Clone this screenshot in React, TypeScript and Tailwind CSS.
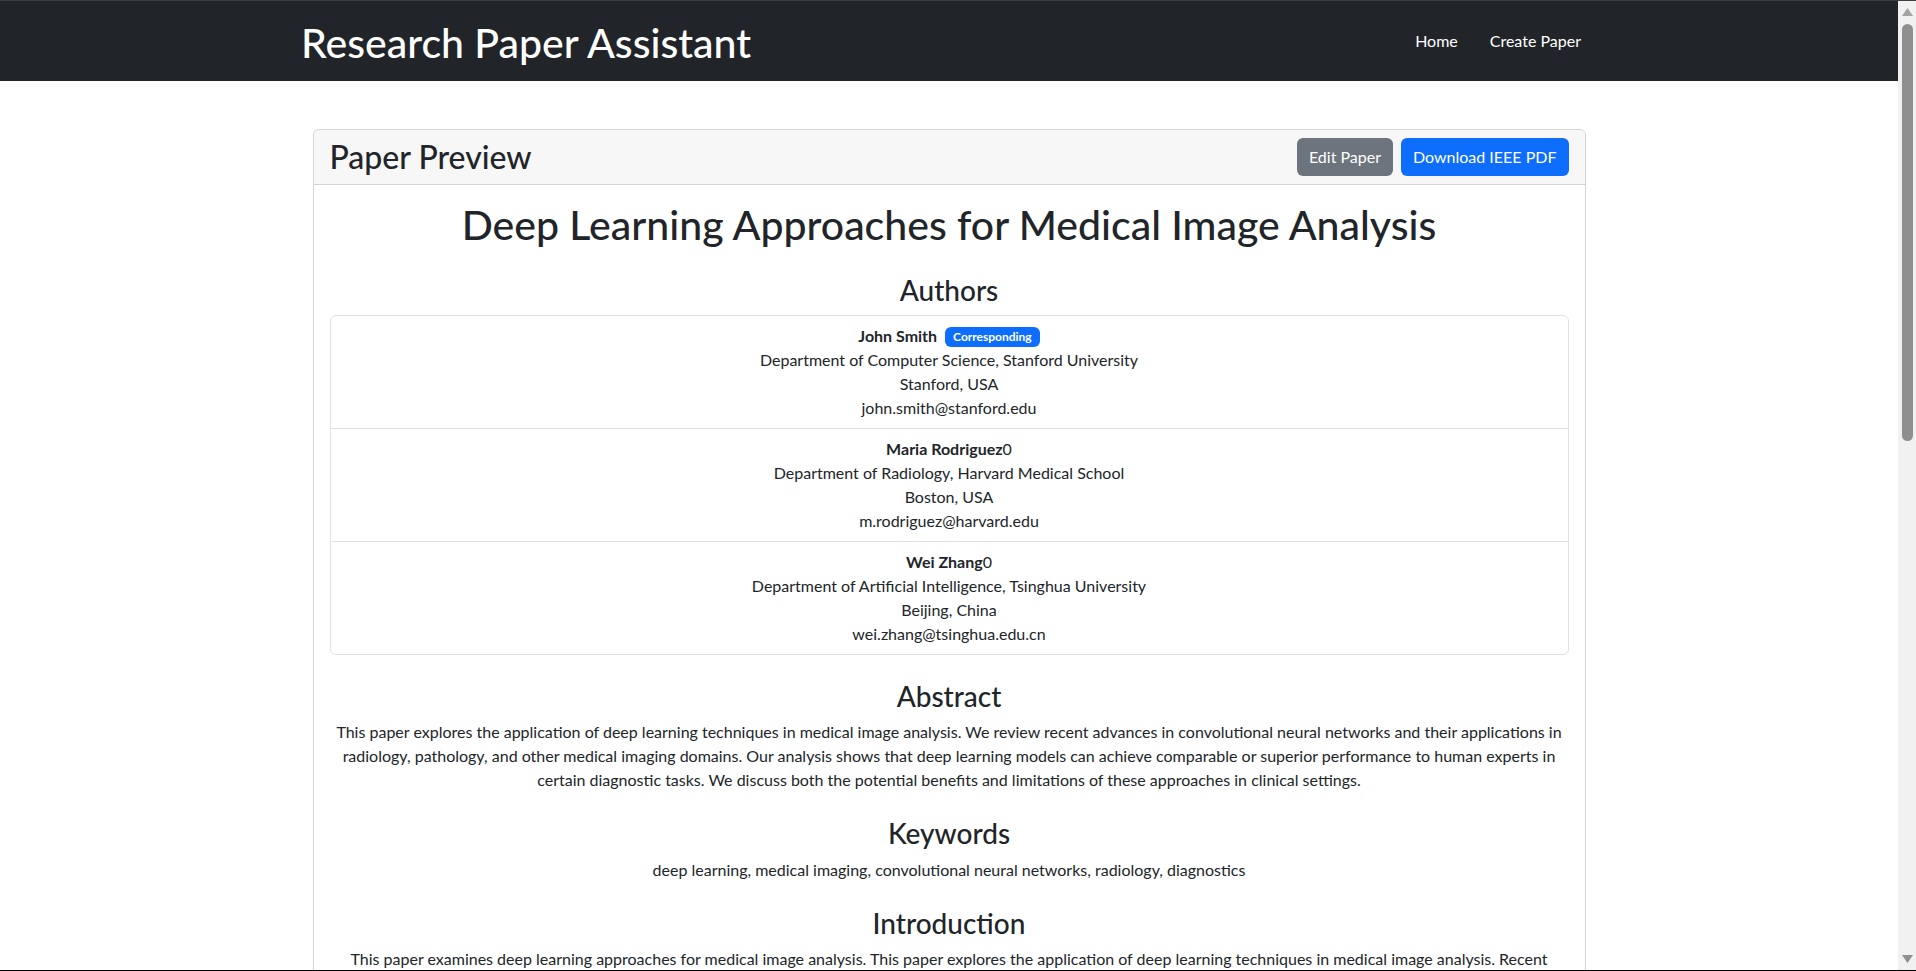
import React from "react";

const authors = [
  {
    name: "John Smith",
    corresponding: true,
    dept: "Department of Computer Science, Stanford University",
    loc: "Stanford, USA",
    email: "john.smith@stanford.edu",
  },
  {
    name: "Maria Rodriguez",
    corresponding: false,
    dept: "Department of Radiology, Harvard Medical School",
    loc: "Boston, USA",
    email: "m.rodriguez@harvard.edu",
  },
  {
    name: "Wei Zhang",
    corresponding: false,
    dept: "Department of Artificial Intelligence, Tsinghua University",
    loc: "Beijing, China",
    email: "wei.zhang@tsinghua.edu.cn",
  },
];

function Section({ title, children }: { title: string; children: React.ReactNode }) {
  return (
    <div className="mb-6">
      <h3 className="text-center text-[28px] font-medium leading-[1.2] pt-[1px] mb-[7px]">{title}</h3>
      {children}
    </div>
  );
}

function Scrollbar() {
  return (
    <div className="w-[18px] shrink-0 bg-[#f1f1f1] flex flex-col items-center">
      <svg width="11" height="8" viewBox="0 0 11 8" className="mt-[7px]">
        <path d="M5.5 0 L11 8 L0 8 Z" fill="#a3a3a3" />
      </svg>
      <div className="mt-[8px] w-[11px] h-[417px] rounded-full bg-[#8f8f8f]" />
      <div className="flex-1" />
      <svg width="11" height="8" viewBox="0 0 11 8" className="mb-[7px]">
        <path d="M0 0 L11 0 L5.5 8 Z" fill="#8f8f8f" />
      </svg>
    </div>
  );
}

export default function App() {
  return (
    <div
      className="h-[971px] flex overflow-hidden bg-white text-[#212529] text-[16px] leading-[24px] border-t border-[#3c4045] border-b border-b-black"
      style={{ fontFamily: "Lato, 'Noto Sans', sans-serif" }}
    >
      <div className="flex-1 min-w-0 overflow-hidden">
        <nav className="bg-[#212529] h-[80px]">
          <div className="mx-auto w-[1320px] px-3 h-full flex items-center justify-between">
            <span className="text-white text-[41px] font-medium leading-[1.2] mt-[3px]">Research Paper Assistant</span>
            <div className="flex items-center">
              <a className="px-4 text-white">Home</a>
              <a className="px-4 text-white">Create Paper</a>
            </div>
          </div>
        </nav>

        <div className="mx-auto w-[1273px] mt-12 mb-12 border border-[#d4d4d4] rounded-md">
          <div className="flex items-center justify-between px-4 py-2 bg-[#f7f7f7] border-b border-[#d4d4d4] rounded-t-md">
            <h2 className="text-[32px] font-medium leading-[38px]">Paper Preview</h2>
            <div className="flex items-center gap-2">
              <button className="h-[38px] px-3 rounded-md bg-[#6c757d] text-white">Edit Paper</button>
              <button className="h-[38px] px-3 rounded-md bg-[#0d6efd] text-white">Download IEEE PDF</button>
            </div>
          </div>
          <div className="p-4">
            <h1 className="text-center text-[41px] font-medium leading-[48px] mb-6">
              Deep Learning Approaches for Medical Image Analysis
            </h1>

            <Section title="Authors">
              <div className="border border-[#dee2e6] rounded-md">
                {authors.map((a, i) => (
                  <div
                    key={a.email}
                    className={`px-4 py-2 text-center ${i < authors.length - 1 ? "border-b border-[#dee2e6]" : ""}`}
                  >
                    <div>
                      <span className="font-bold">{a.name}</span>
                      {a.corresponding ? (
                        <span className="ml-2 inline-block align-[1px] rounded-md bg-[#0d6efd] text-white text-[12px] font-bold leading-[12px] px-[8px] py-[4px]">
                          Corresponding
                        </span>
                      ) : (
                        <span>0</span>
                      )}
                    </div>
                    <div>{a.dept}</div>
                    <div>{a.loc}</div>
                    <div>{a.email}</div>
                  </div>
                ))}
              </div>
            </Section>

            <Section title="Abstract">
              <p className="text-center">
                This paper explores the application of deep learning techniques in medical image analysis. We review
                recent advances in convolutional neural networks and their applications in radiology, pathology, and
                other medical imaging domains. Our analysis shows that deep learning models can achieve comparable or
                superior performance to human experts in certain diagnostic tasks. We discuss both the potential
                benefits and limitations of these approaches in clinical settings.
              </p>
            </Section>

            <Section title="Keywords">
              <p className="text-center">
                deep learning, medical imaging, convolutional neural networks, radiology, diagnostics
              </p>
            </Section>

            <Section title="Introduction">
              <p className="text-center">
                This paper examines deep learning approaches for medical image analysis. This paper explores the
                application of deep learning techniques in medical image analysis. Recent advances in convolutional
                neural networks have enabled automated systems to detect, segment and classify abnormalities in
                medical images with high accuracy. In this work we summarize the main architectures, datasets and
                evaluation protocols used in the field, and we highlight open challenges for clinical deployment.
              </p>
            </Section>

            <Section title="Methodology">
              <p className="text-center">
                We surveyed peer-reviewed publications describing deep learning models applied to radiology,
                pathology, dermatology and ophthalmology, and compared reported performance against expert clinicians.
              </p>
            </Section>

            <Section title="Conclusion">
              <p className="text-center">
                Deep learning holds considerable promise for medical image analysis, but careful validation,
                interpretability and regulatory oversight remain essential before widespread clinical adoption.
              </p>
            </Section>
          </div>
        </div>
      </div>
      <Scrollbar />
    </div>
  );
}
